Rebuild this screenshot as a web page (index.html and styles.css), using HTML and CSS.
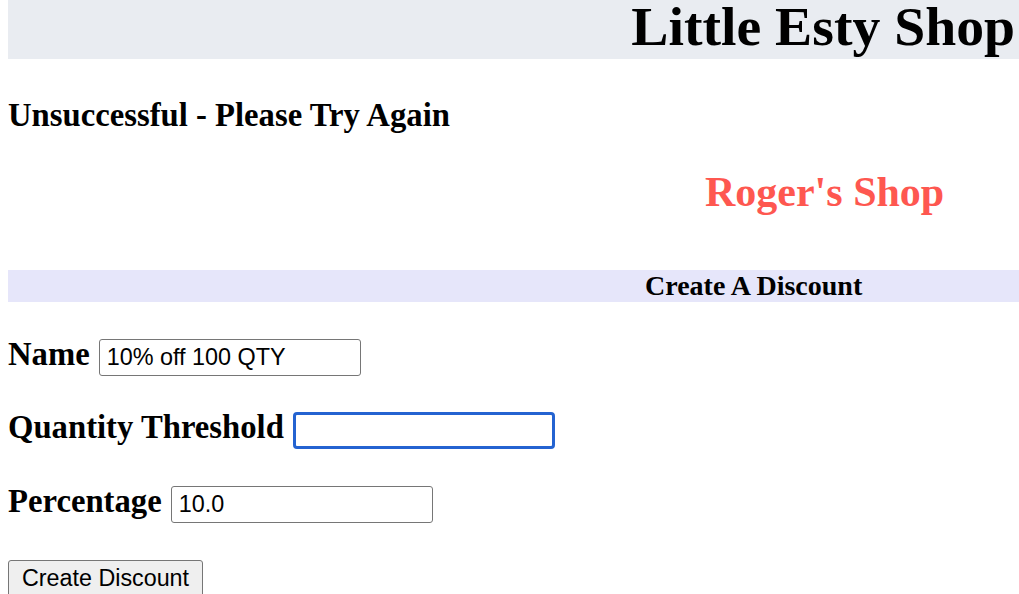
FILE: index.html
```html
<!DOCTYPE html>
<html lang="en">
<head>
<meta charset="utf-8">
<title>Little Esty Shop</title>
<link rel="stylesheet" href="styles.css">
</head>
<body>
  <header class="site-header">
    <h1 class="site-title">Little Esty Shop</h1>
  </header>

  <h2 class="flash">Unsuccessful - Please Try Again</h2>

  <h2 class="shop-name">Roger's Shop</h2>

  <h3 class="section-bar">Create A Discount</h3>

  <form class="discount-form">
    <div class="row">
      <label class="field-label" for="name">Name</label>
      <input class="field" type="text" id="name" value="10% off 100 QTY">
    </div>
    <div class="row">
      <label class="field-label" for="qty">Quantity Threshold</label>
      <input class="field field-focus" type="text" id="qty" value="">
    </div>
    <div class="row">
      <label class="field-label" for="pct">Percentage</label>
      <input class="field" type="text" id="pct" value="10.0">
    </div>
    <div class="actions">
      <button class="submit" type="button">Create Discount</button>
    </div>
  </form>
</body>
</html>
```

FILE: styles.css
```css
html {
  overflow: hidden;
}

body {
  margin: 0 0 0 8px;
  font-family: "Liberation Serif", "Times New Roman", serif;
  color: #000;
  background: #fff;
}

.site-header {
  background: #e9ecf1;
  height: 59px;
}

.site-title {
  margin: 0;
  padding-right: 4px;
  text-align: right;
  font-size: 55.7px;
  line-height: 52px;
  font-weight: bold;
}

.flash {
  margin: 36px 0 0;
  font-size: 32.7px;
  line-height: 40px;
  font-weight: bold;
}

.shop-name {
  margin: 33px 0 0;
  padding-left: 697px;
  font-size: 42px;
  line-height: 48px;
  font-weight: bold;
  color: #fe5750;
}

.section-bar {
  margin: 54px 0 0;
  padding-left: 637px;
  background: #e6e6fa;
  font-size: 28px;
  line-height: 32px;
  font-weight: bold;
}

.discount-form {
  margin-top: 31.5px;
  display: flex;
  flex-direction: column;
  gap: 31.6px;
}

.row {
  display: flex;
  align-items: baseline;
  gap: 9px;
}

.field-label {
  font-size: 32.7px;
  line-height: 40px;
  font-weight: bold;
}

.field {
  box-sizing: border-box;
  width: 262px;
  height: 37px;
  margin: 0;
  padding: 0 7px;
  border: 1px solid #767676;
  border-radius: 3px;
  font-family: "Liberation Sans", Arial, sans-serif;
  font-size: 23.4px;
  color: #000;
  background: #fff;
  outline: none;
}

.field-focus {
  border: 3px solid #2463d1;
  border-radius: 4px;
  padding: 0 5px;
}

.actions {
  margin-top: 6px;
}

.submit {
  box-sizing: border-box;
  height: 37px;
  margin: 0;
  padding: 0 13px;
  border: 1px solid #767676;
  border-radius: 3px;
  background: #efefef;
  font-family: "Liberation Sans", Arial, sans-serif;
  font-size: 23.3px;
  color: #000;
}
```
